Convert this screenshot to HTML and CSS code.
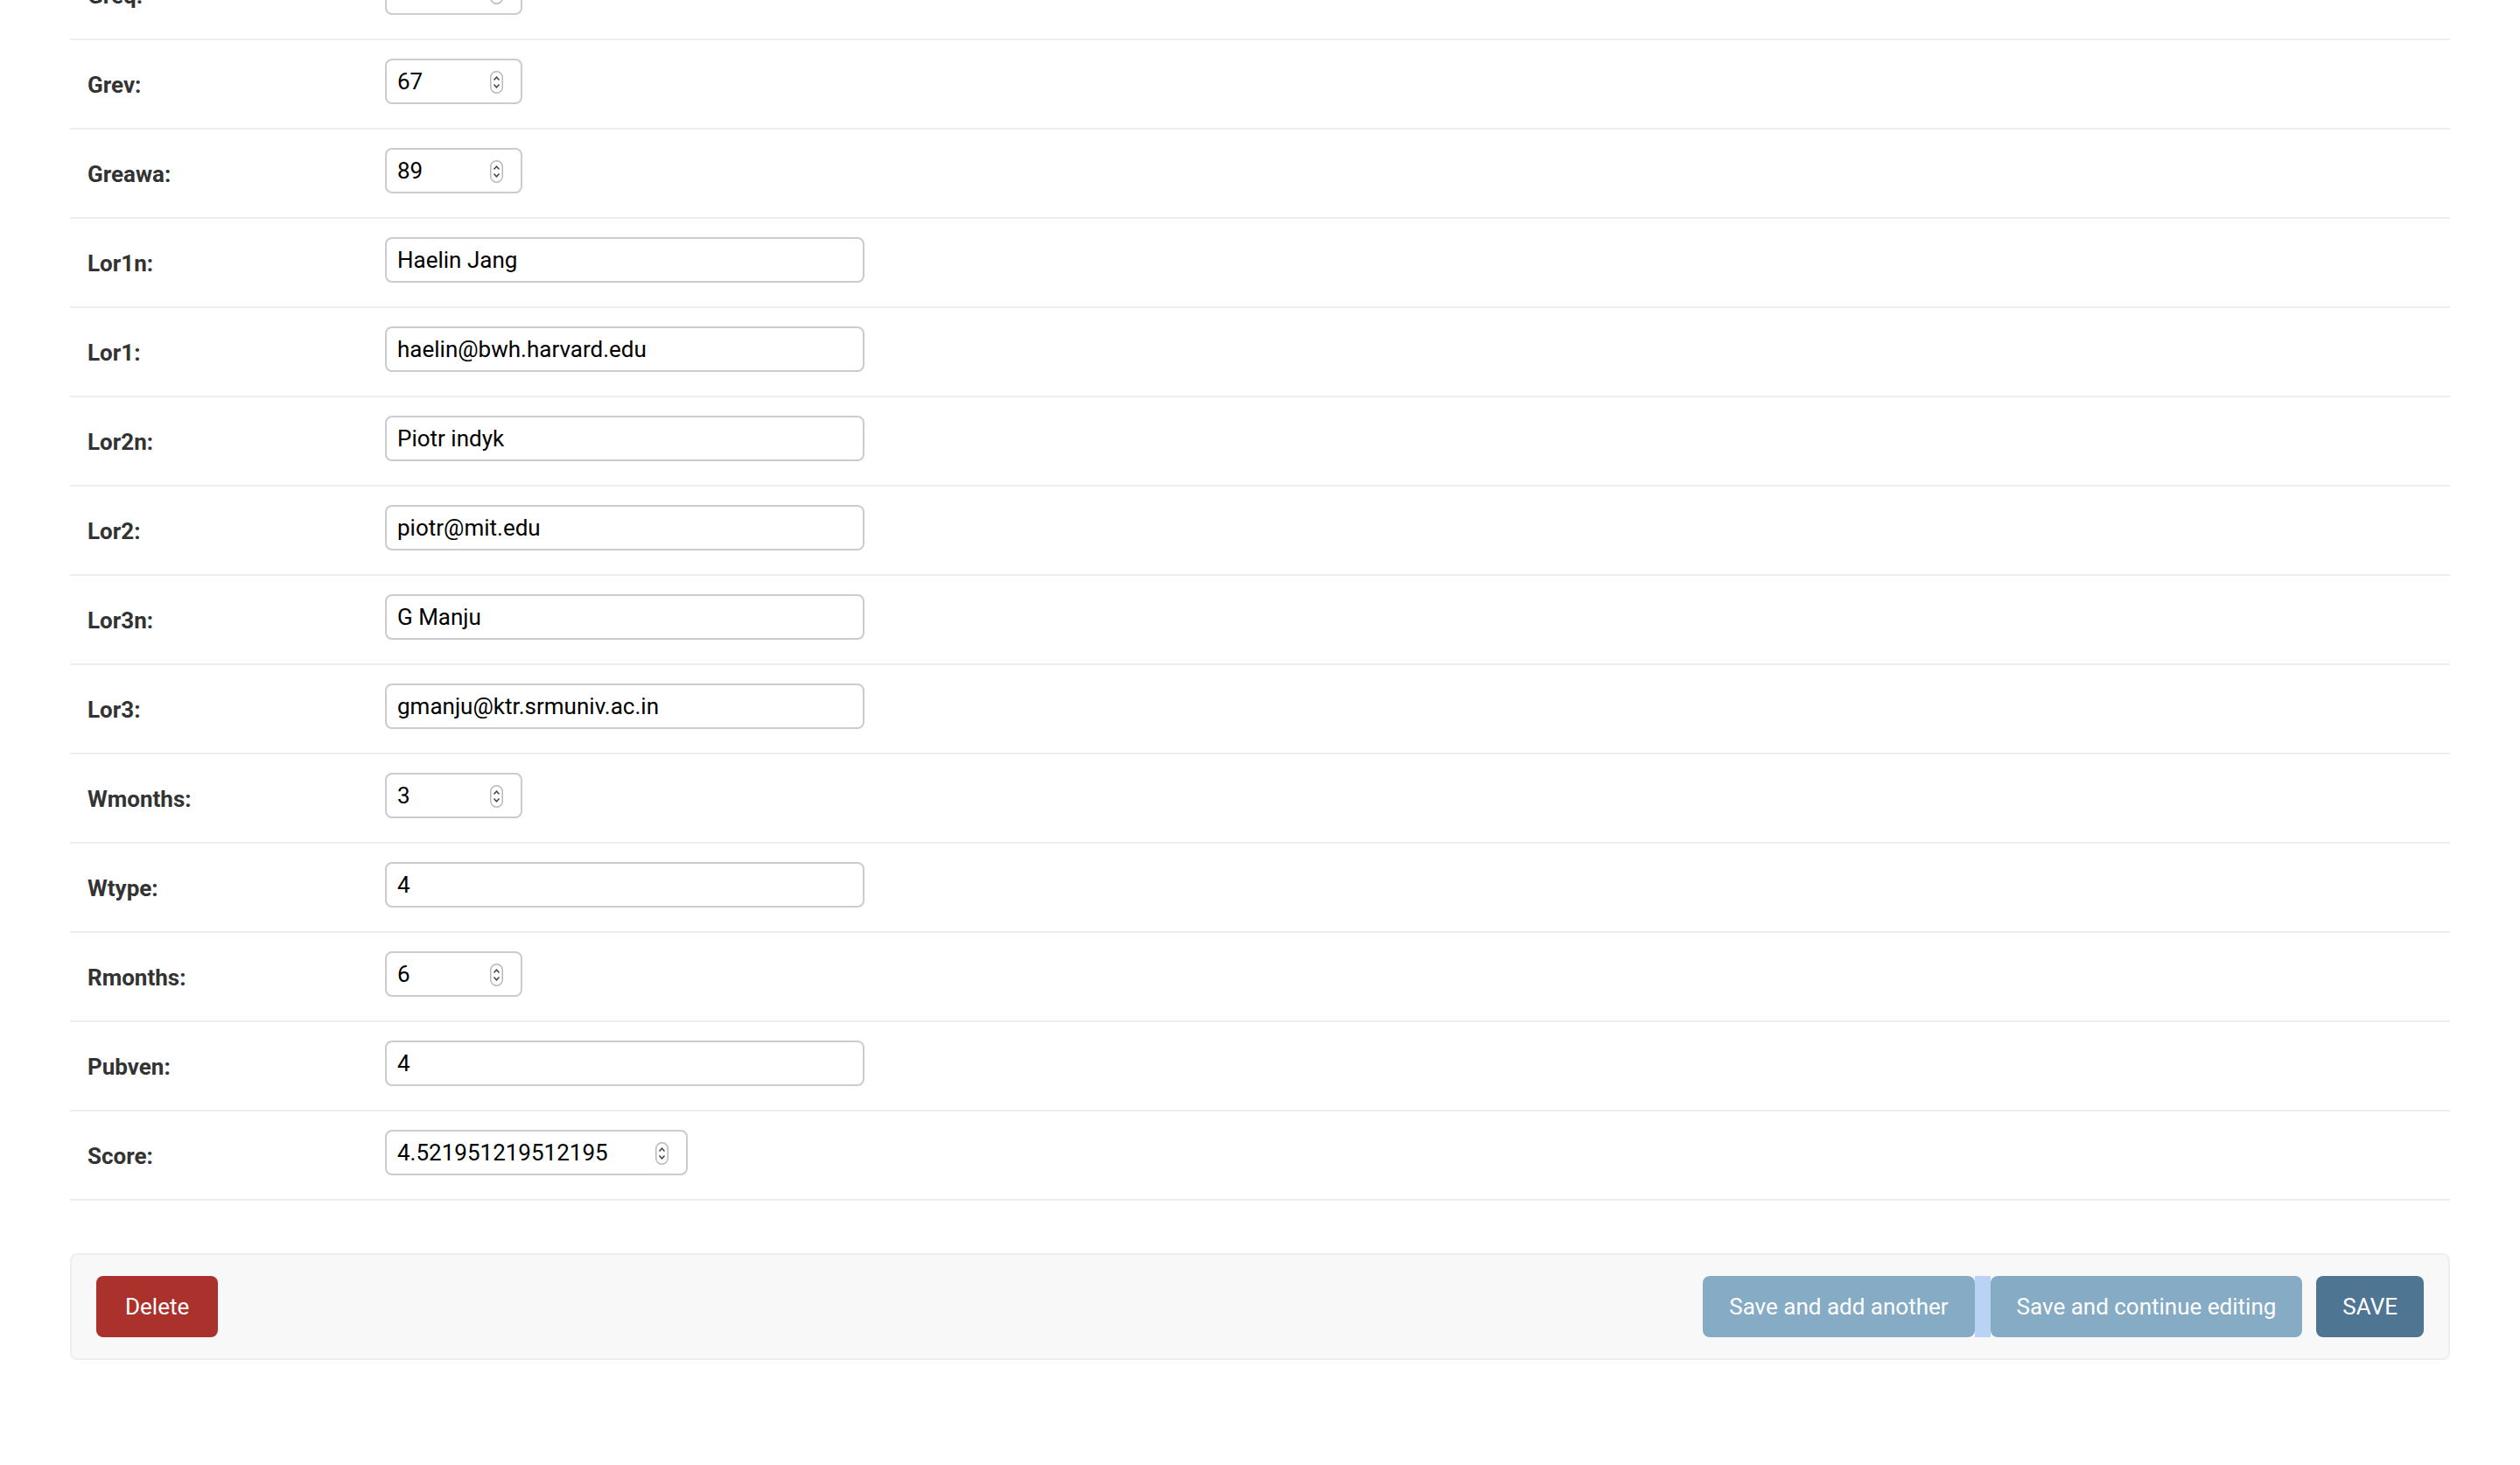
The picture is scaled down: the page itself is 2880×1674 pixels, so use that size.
FILE: index.html
```html
<!DOCTYPE html>
<html lang="en">
<head>
<meta charset="utf-8">
<title>Change application</title>
<link rel="stylesheet" href="styles.css">
</head>
<body>
<div class="content">
  <div class="fieldset">
    <div class="form-row"><label>Greq:</label><div class="field num"><span class="val">4</span><svg class="spin" viewBox="0 0 15 26"><rect x="0.75" y="0.75" width="13.5" height="24.5" rx="6.75" fill="#fff" stroke="#b8b8b8" stroke-width="1.5"/><path d="M4.5 10.4 L7.5 7.2 L10.5 10.4" fill="none" stroke="#444" stroke-width="1.5"/><path d="M4.5 15.6 L7.5 18.8 L10.5 15.6" fill="none" stroke="#444" stroke-width="1.5"/></svg></div></div>
    <div class="form-row"><label>Grev:</label><div class="field num"><span class="val">67</span><svg class="spin" viewBox="0 0 15 26"><rect x="0.75" y="0.75" width="13.5" height="24.5" rx="6.75" fill="#fff" stroke="#b8b8b8" stroke-width="1.5"/><path d="M4.5 10.4 L7.5 7.2 L10.5 10.4" fill="none" stroke="#444" stroke-width="1.5"/><path d="M4.5 15.6 L7.5 18.8 L10.5 15.6" fill="none" stroke="#444" stroke-width="1.5"/></svg></div></div>
    <div class="form-row"><label>Greawa:</label><div class="field num"><span class="val">89</span><svg class="spin" viewBox="0 0 15 26"><rect x="0.75" y="0.75" width="13.5" height="24.5" rx="6.75" fill="#fff" stroke="#b8b8b8" stroke-width="1.5"/><path d="M4.5 10.4 L7.5 7.2 L10.5 10.4" fill="none" stroke="#444" stroke-width="1.5"/><path d="M4.5 15.6 L7.5 18.8 L10.5 15.6" fill="none" stroke="#444" stroke-width="1.5"/></svg></div></div>
    <div class="form-row"><label>Lor1n:</label><div class="field text"><span class="val">Haelin Jang</span></div></div>
    <div class="form-row"><label>Lor1:</label><div class="field text"><span class="val">haelin@bwh.harvard.edu</span></div></div>
    <div class="form-row"><label>Lor2n:</label><div class="field text"><span class="val">Piotr indyk</span></div></div>
    <div class="form-row"><label>Lor2:</label><div class="field text"><span class="val">piotr@mit.edu</span></div></div>
    <div class="form-row"><label>Lor3n:</label><div class="field text"><span class="val">G Manju</span></div></div>
    <div class="form-row"><label>Lor3:</label><div class="field text"><span class="val">gmanju@ktr.srmuniv.ac.in</span></div></div>
    <div class="form-row"><label>Wmonths:</label><div class="field num"><span class="val">3</span><svg class="spin" viewBox="0 0 15 26"><rect x="0.75" y="0.75" width="13.5" height="24.5" rx="6.75" fill="#fff" stroke="#b8b8b8" stroke-width="1.5"/><path d="M4.5 10.4 L7.5 7.2 L10.5 10.4" fill="none" stroke="#444" stroke-width="1.5"/><path d="M4.5 15.6 L7.5 18.8 L10.5 15.6" fill="none" stroke="#444" stroke-width="1.5"/></svg></div></div>
    <div class="form-row"><label>Wtype:</label><div class="field text"><span class="val">4</span></div></div>
    <div class="form-row"><label>Rmonths:</label><div class="field num"><span class="val">6</span><svg class="spin" viewBox="0 0 15 26"><rect x="0.75" y="0.75" width="13.5" height="24.5" rx="6.75" fill="#fff" stroke="#b8b8b8" stroke-width="1.5"/><path d="M4.5 10.4 L7.5 7.2 L10.5 10.4" fill="none" stroke="#444" stroke-width="1.5"/><path d="M4.5 15.6 L7.5 18.8 L10.5 15.6" fill="none" stroke="#444" stroke-width="1.5"/></svg></div></div>
    <div class="form-row"><label>Pubven:</label><div class="field text"><span class="val">4</span></div></div>
    <div class="form-row"><label>Score:</label><div class="field num wide"><span class="val">4.521951219512195</span><svg class="spin" viewBox="0 0 15 26"><rect x="0.75" y="0.75" width="13.5" height="24.5" rx="6.75" fill="#fff" stroke="#b8b8b8" stroke-width="1.5"/><path d="M4.5 10.4 L7.5 7.2 L10.5 10.4" fill="none" stroke="#444" stroke-width="1.5"/><path d="M4.5 15.6 L7.5 18.8 L10.5 15.6" fill="none" stroke="#444" stroke-width="1.5"/></svg></div></div>
  </div>
  <div class="submit-row">
    <span class="btn deletelink">Delete</span>
    <div class="save-group">
      <span class="btn light">Save and add another</span><span class="sel-gap"></span><span class="btn light">Save and continue editing</span><span class="btn default">SAVE</span>
    </div>
  </div>
</div>
</body>
</html>
```
FILE: styles.css
```css
html, body {
  margin: 0;
  padding: 0;
  background: #fff;
}

body {
  font-family: Roboto, "Liberation Sans", Arial, sans-serif;
  font-size: 26px;
  color: #333;
}

.content {
  display: flow-root;
  padding: 0 80px;
}

.fieldset {
  margin-top: -56px;
}

.form-row {
  display: flex;
  align-items: flex-start;
  padding: 21px 20px 27px;
  border-bottom: 2px solid #eeeeee;
}

.form-row label {
  flex: none;
  width: 320px;
  padding: 15px 20px 0 0;
  font-weight: 700;
  font-size: 26px;
  line-height: 30px;
  color: #333;
}

.field {
  box-sizing: border-box;
  display: flex;
  align-items: center;
  height: 52px;
  padding: 0 12px;
  border: 2px solid #cccccc;
  border-radius: 8px;
  background: #fff;
  font-size: 26px;
  line-height: 48px;
  color: #000;
  white-space: nowrap;
}

.field.text {
  width: 548px;
}

.field.num {
  width: 157px;
  padding-right: 20px;
}

.field.num.wide {
  width: 346px;
}

.field .val {
  flex: 1;
}

.spin {
  flex: none;
  width: 15px;
  height: 26px;
  margin-top: 2px;
}

.submit-row {
  display: flex;
  align-items: center;
  margin-top: 60px;
  padding: 24px 28px;
  background: #f8f8f8;
  border: 2px solid #eeeeee;
  border-radius: 8px;
}

.save-group {
  display: flex;
  align-items: center;
  margin-left: auto;
}

.btn {
  display: block;
  box-sizing: border-box;
  height: 70px;
  line-height: 70px;
  padding: 0 30px;
  border-radius: 8px;
  color: #fff;
  font-size: 26px;
  white-space: nowrap;
}

.deletelink {
  background: #ab312c;
  padding: 0 33px;
}

.light {
  background: #86abc4;
}

.default {
  background: #4e7591;
  margin-left: 16px;
}

.sel-gap {
  display: block;
  width: 18px;
  height: 70px;
  background: #b9d3f5;
}
```
